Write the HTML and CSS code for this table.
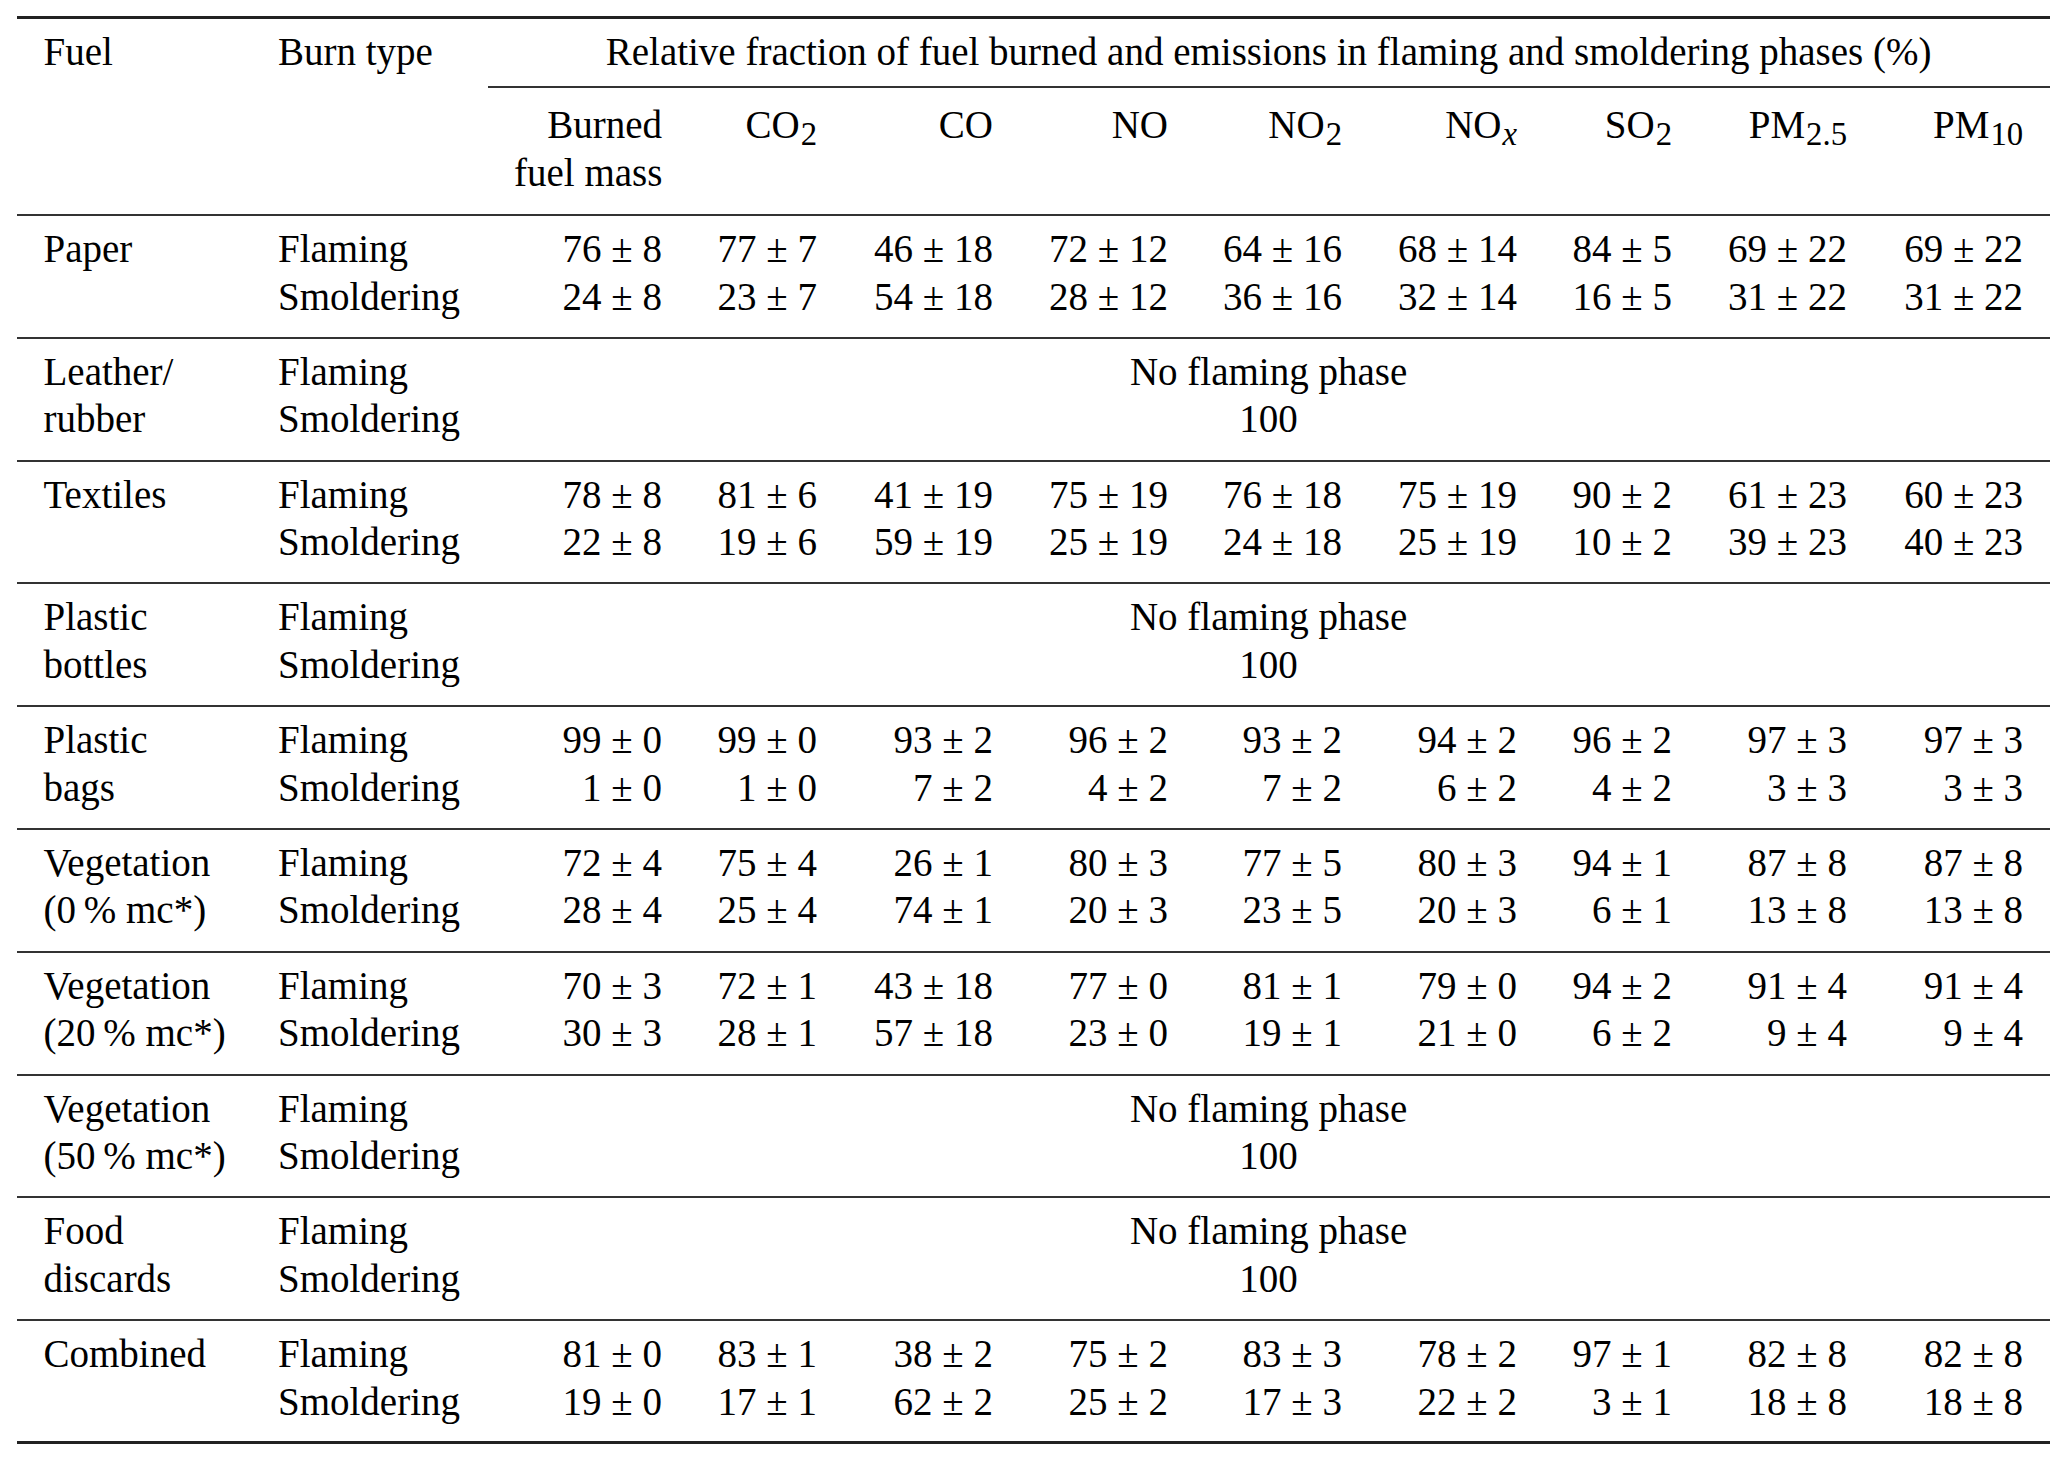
FILE: index.html
```html
<!DOCTYPE html>
<html lang="en">
<head>
<meta charset="utf-8">
<title>Relative fraction of fuel burned and emissions</title>
<link rel="stylesheet" href="styles.css">
</head>
<body>
<table class="tbl">
  <colgroup>
    <col class="w-fuel"><col class="w-burn"><col class="w-c1"><col class="w-c2"><col class="w-c3"><col class="w-c4"><col class="w-c5"><col class="w-c6"><col class="w-c7"><col class="w-c8"><col class="w-c9">
  </colgroup>
  <thead>
    <tr class="hr1">
      <th>Fuel</th>
      <th>Burn type</th>
      <th class="span" colspan="9">Relative fraction of fuel burned and emissions in flaming and smoldering phases (%)</th>
    </tr>
    <tr class="hr2">
      <th></th>
      <th></th>
      <th class="num">Burned<br>fuel mass</th>
      <th class="num">CO<sub>2</sub></th>
      <th class="num">CO</th>
      <th class="num">NO</th>
      <th class="num">NO<sub>2</sub></th>
      <th class="num">NO<sub><i>x</i></sub></th>
      <th class="num">SO<sub>2</sub></th>
      <th class="num">PM<sub>2.5</sub></th>
      <th class="num">PM<sub>10</sub></th>
    </tr>
  </thead>
  <tbody>
    <tr>
      <td>Paper</td><td>Flaming<br>Smoldering</td>
      <td class="num">76 ± 8<br>24 ± 8</td><td class="num">77 ± 7<br>23 ± 7</td><td class="num">46 ± 18<br>54 ± 18</td><td class="num">72 ± 12<br>28 ± 12</td><td class="num">64 ± 16<br>36 ± 16</td><td class="num">68 ± 14<br>32 ± 14</td><td class="num">84 ± 5<br>16 ± 5</td><td class="num">69 ± 22<br>31 ± 22</td><td class="num">69 ± 22<br>31 ± 22</td>
    </tr>
    <tr>
      <td>Leather/<br>rubber</td><td>Flaming<br>Smoldering</td>
      <td class="mid" colspan="9">No flaming phase<br>100</td>
    </tr>
    <tr>
      <td>Textiles</td><td>Flaming<br>Smoldering</td>
      <td class="num">78 ± 8<br>22 ± 8</td><td class="num">81 ± 6<br>19 ± 6</td><td class="num">41 ± 19<br>59 ± 19</td><td class="num">75 ± 19<br>25 ± 19</td><td class="num">76 ± 18<br>24 ± 18</td><td class="num">75 ± 19<br>25 ± 19</td><td class="num">90 ± 2<br>10 ± 2</td><td class="num">61 ± 23<br>39 ± 23</td><td class="num">60 ± 23<br>40 ± 23</td>
    </tr>
    <tr>
      <td>Plastic<br>bottles</td><td>Flaming<br>Smoldering</td>
      <td class="mid" colspan="9">No flaming phase<br>100</td>
    </tr>
    <tr>
      <td>Plastic<br>bags</td><td>Flaming<br>Smoldering</td>
      <td class="num">99 ± 0<br>1 ± 0</td><td class="num">99 ± 0<br>1 ± 0</td><td class="num">93 ± 2<br>7 ± 2</td><td class="num">96 ± 2<br>4 ± 2</td><td class="num">93 ± 2<br>7 ± 2</td><td class="num">94 ± 2<br>6 ± 2</td><td class="num">96 ± 2<br>4 ± 2</td><td class="num">97 ± 3<br>3 ± 3</td><td class="num">97 ± 3<br>3 ± 3</td>
    </tr>
    <tr>
      <td>Vegetation<br>(0&thinsp;% mc*)</td><td>Flaming<br>Smoldering</td>
      <td class="num">72 ± 4<br>28 ± 4</td><td class="num">75 ± 4<br>25 ± 4</td><td class="num">26 ± 1<br>74 ± 1</td><td class="num">80 ± 3<br>20 ± 3</td><td class="num">77 ± 5<br>23 ± 5</td><td class="num">80 ± 3<br>20 ± 3</td><td class="num">94 ± 1<br>6 ± 1</td><td class="num">87 ± 8<br>13 ± 8</td><td class="num">87 ± 8<br>13 ± 8</td>
    </tr>
    <tr>
      <td>Vegetation<br>(20&thinsp;% mc*)</td><td>Flaming<br>Smoldering</td>
      <td class="num">70 ± 3<br>30 ± 3</td><td class="num">72 ± 1<br>28 ± 1</td><td class="num">43 ± 18<br>57 ± 18</td><td class="num">77 ± 0<br>23 ± 0</td><td class="num">81 ± 1<br>19 ± 1</td><td class="num">79 ± 0<br>21 ± 0</td><td class="num">94 ± 2<br>6 ± 2</td><td class="num">91 ± 4<br>9 ± 4</td><td class="num">91 ± 4<br>9 ± 4</td>
    </tr>
    <tr>
      <td>Vegetation<br>(50&thinsp;% mc*)</td><td>Flaming<br>Smoldering</td>
      <td class="mid" colspan="9">No flaming phase<br>100</td>
    </tr>
    <tr>
      <td>Food<br>discards</td><td>Flaming<br>Smoldering</td>
      <td class="mid" colspan="9">No flaming phase<br>100</td>
    </tr>
    <tr class="last">
      <td>Combined</td><td>Flaming<br>Smoldering</td>
      <td class="num">81 ± 0<br>19 ± 0</td><td class="num">83 ± 1<br>17 ± 1</td><td class="num">38 ± 2<br>62 ± 2</td><td class="num">75 ± 2<br>25 ± 2</td><td class="num">83 ± 3<br>17 ± 3</td><td class="num">78 ± 2<br>22 ± 2</td><td class="num">97 ± 1<br>3 ± 1</td><td class="num">82 ± 8<br>18 ± 8</td><td class="num">82 ± 8<br>18 ± 8</td>
    </tr>
  </tbody>
</table>
</body>
</html>
```

FILE: styles.css
```css
html, body {
  margin: 0;
  padding: 0;
  background: #ffffff;
}

body {
  color: #000000;
  font-family: "Liberation Serif", "Times New Roman", serif;
  font-size: 39px;
  line-height: 47.5px;
}

.tbl {
  margin: 16px 0 0 17px;
  border-collapse: separate;
  border-spacing: 0;
  table-layout: fixed;
  width: 2032.5px;
}

.w-fuel { width: 234.5px; }
.w-burn { width: 236px; }
.w-c1 { width: 201px; }
.w-c2 { width: 155px; }
.w-c3 { width: 176px; }
.w-c4 { width: 175px; }
.w-c5 { width: 174px; }
.w-c6 { width: 175px; }
.w-c7 { width: 155px; }
.w-c8 { width: 175px; }
.w-c9 { width: 176px; }

.tbl th,
.tbl td {
  padding: 0 26.5px;
  font-weight: normal;
  text-align: left;
  vertical-align: top;
  white-space: nowrap;
}

.tbl .num {
  text-align: right;
}

.tbl .mid,
.tbl .span {
  text-align: center;
}

.hr1 th {
  border-top: 3px solid #222222;
  padding-top: 9px;
  padding-bottom: 10px;
}

.hr1 .span {
  border-bottom: 2px solid #333333;
}

.hr2 th {
  padding-top: 13.5px;
  padding-bottom: 18px;
  border-bottom: 2px solid #333333;
}

.tbl tbody td {
  padding-top: 9px;
  padding-bottom: 16.8px;
  border-bottom: 2px solid #333333;
}

.tbl tbody tr.last td {
  border-bottom: 3px solid #222222;
  padding-bottom: 15.8px;
}

sub {
  font-size: 84%;
  line-height: 0;
  vertical-align: -0.22em;
  padding-left: 0.03em;
}

sub i {
  font-style: italic;
}
```
